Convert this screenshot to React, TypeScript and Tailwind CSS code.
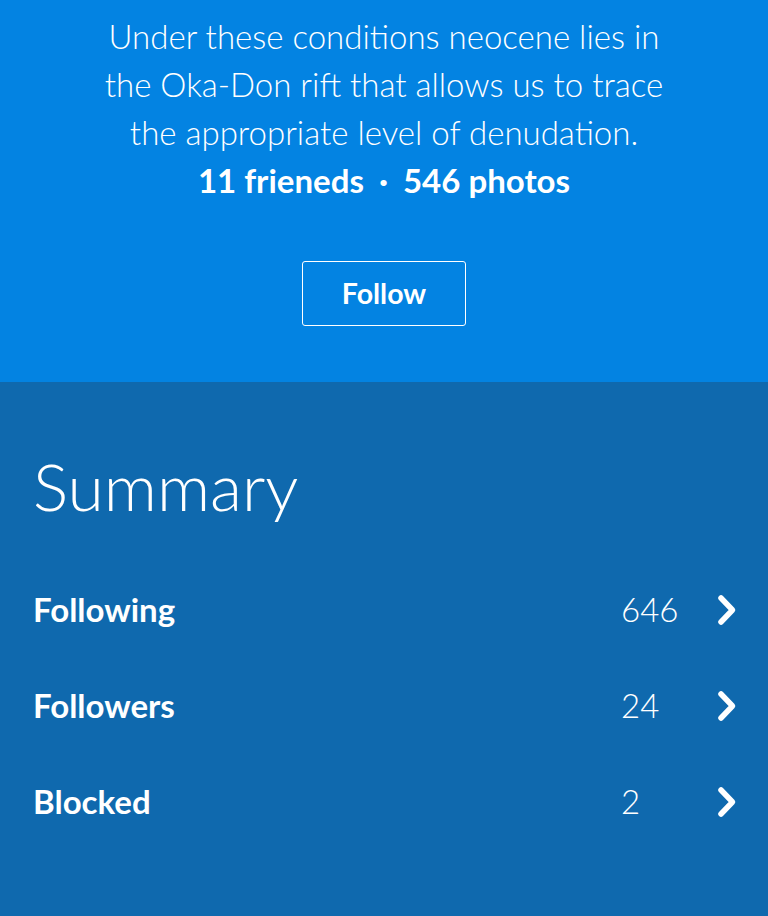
const rows = [
  { label: 'Following', count: '646' },
  { label: 'Followers', count: '24' },
  { label: 'Blocked', count: '2' },
];

function Chevron() {
  return (
    <svg width="22" height="34" viewBox="0 0 22 34" fill="none" className="shrink-0">
      <polyline
        points="5,5 16.5,17 5,29"
        stroke="white"
        strokeWidth="5.5"
        strokeLinecap="round"
        strokeLinejoin="round"
      />
    </svg>
  );
}

export default function App() {
  return (
    <div className="min-h-[916px] bg-[#0f69ae] font-['Lato','Liberation_Sans',sans-serif] text-white">
      <section className="bg-[#0383e2] pt-[12px] pb-[56px] flex flex-col items-center text-center">
        <p className="w-[580px] text-[33px] leading-[48px] font-light">
          Under these conditions neocene lies in the Oka-Don rift that allows us to trace the
          appropriate level of denudation.
        </p>
        <p className="text-[33px] leading-[48px] font-bold flex items-center gap-[15px]">
          <span>11 frieneds</span>
          <span>·</span>
          <span>546 photos</span>
        </p>
        <button className="mt-[57px] w-[164px] h-[65px] border border-white rounded-[3px] text-[28.5px] font-bold">
          Follow
        </button>
      </section>

      <section className="pl-[33px] pr-[30px] pt-[64px]">
        <h2 className="text-[66px] leading-[80px] font-light">Summary</h2>
        <div className="mt-[36px]">
          {rows.map((r) => (
            <div key={r.label} className="flex items-center h-[96px]">
              <span className="flex-1 text-[33px] font-bold">{r.label}</span>
              <span className="w-[95px] text-[33px] font-light">{r.count}</span>
              <Chevron />
            </div>
          ))}
        </div>
      </section>
    </div>
  );
}
